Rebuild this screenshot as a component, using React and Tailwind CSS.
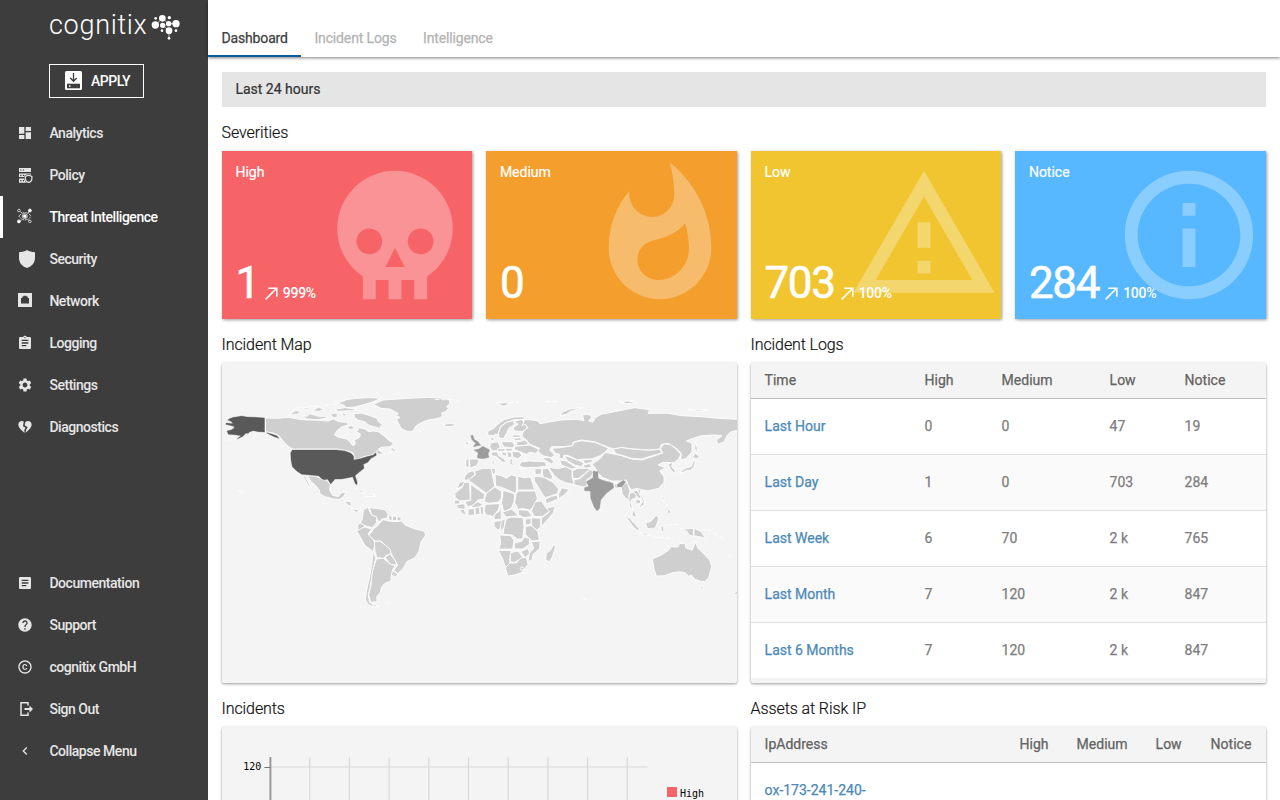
import React from "react";
import {
  MdDashboard, MdAssignment, MdSettings, MdArticle, MdHelp,
  MdCopyright, MdChevronLeft, MdWhatshot, MdInfoOutline,
} from "react-icons/md";

const PolicyIcon = () => (
  <svg className="size-4" viewBox="0 0 16 16" fill="currentColor">
    <path fillRule="evenodd" d="M2 1h12v4H2zM3.3 2.4v1.2h1.2V2.4zM5.8 2.4v1.2H7V2.4zM2 6.5h12v1.2l-2.6-.7-4 1.6V10H2zM3.3 7.7v1.2h1.2V7.7zM5.8 7.7v1.2H7V7.7zM2 11.6h5.2c.2 1.600 1 3 2.200 4.200H2zM3.300 13v1.200h1.200V13zM5.800 13v1.200H7V13z" />
    <path d="M11.600 8.200l3.300 1.200v2.300c0 1.900-1.300 3.100-3.300 3.900-2-.8-3.300-2-3.300-3.900V9.400z" fill="#3d3d3d" stroke="currentColor" strokeWidth="1.200" />
  </svg>
);
const ThreatIcon = () => (
  <svg className="size-4 -translate-y-px" viewBox="0 0 16 16" fill="none" stroke="currentColor" strokeWidth="0.7">
    <path d="M2 8.300C3.800 5.600 5.700 4.600 8 4.600s4.200 1 6 3.700c-1.800 2.500-3.700 3.600-6 3.600s-4.200-1.100-6-3.600z" strokeDasharray="3 .8" />
    <circle cx="7.800" cy="8.200" r="2.500" />
    <circle cx="7.800" cy="8.200" r="1.400" fill="currentColor" />
    <path d="M3.400 3.600l1.600 1.600M12.500 3.400l-1.600 1.800M3.400 13l1.600-1.600M12.500 13l-1.600-1.600" />
    <circle cx="1.900" cy="2.500" r="1.300" />
    <circle cx="12.900" cy="2.500" r="1.500" fill="currentColor" />
    <circle cx="1.900" cy="13.400" r="1.500" fill="currentColor" />
    <circle cx="12.900" cy="13.400" r="1.300" />
  </svg>
);
const ShieldIcon = () => (
  <svg className="ml-0.5 h-[18px] w-4" viewBox="0 0 16 18" fill="currentColor">
    <path d="M8 0c2.200 1.400 4.800 2 8 2.200v5.600c0 5-3 8.600-8 10.200-5-1.600-8-5.200-8-10.200V2.200C3.200 2 5.800 1.400 8 0z" />
  </svg>
);
const NetworkIcon = () => (
  <svg className="size-4 -translate-y-px" viewBox="0 0 16 16" fill="currentColor">
    <path fillRule="evenodd" d="M1 1h14v14H1zM4 6v5.500h8V6h-1.300V4.500H9.500V3.700h-3v.8H5.300V6z" />
  </svg>
);
const BrokenHeartIcon = () => (
  <svg className="size-4" viewBox="0 0 24 24" fill="currentColor">
    <path d="M10.200 3.900C9.300 3.300 8.400 3 7.300 3 4.300 3 2 5.400 2 8.400c0 4.500 4.200 8 9.300 12.600l-.3-4.700 2-3-4-2.500z" />
    <path d="M12.300 4.900C13.500 3.700 15 3 16.600 3 19.700 3 22 5.400 22 8.400c0 4.400-3.600 7.700-9 12.300l.3-3.900 2.700-4.500-4.500-3z" />
  </svg>
);
const SignOutIcon = () => (
  <svg className="size-4" viewBox="0 0 16 16" fill="currentColor">
    <path d="M11 4.500V1.700H4v12.600h7v-2.800" fill="none" stroke="currentColor" strokeWidth="1.500" />
    <path d="M7.500 7h5V4.500L16 8l-3.500 3.500V9h-5z" />
  </svg>
);
const ApplyIcon = () => (
  <svg className="h-[19px] w-[17px] -translate-y-px" viewBox="0 0 17 19">
    <rect width="17" height="19" rx="1.500" fill="#fff" />
    <path d="M8.500 2v8M5.300 7l3.200 3.300L11.700 7" stroke="#3d3d3d" strokeWidth="1.300" fill="none" />
    <rect x="2" y="12.700" width="13" height="4.600" fill="#3d3d3d" />
    <rect x="4" y="14.300" width="1.500" height="1.500" fill="#fff" />
  </svg>
);
const TrendIcon = ({ className }) => (
  <svg className={className} viewBox="0 0 19 19" fill="none" stroke="currentColor" strokeWidth="1.500">
    <path d="M3.600 15.400L14.700 4.300M6.300 4.200h8.500v8.500" />
  </svg>
);

const mainNav = [
  ["Analytics", MdDashboard], ["Policy", PolicyIcon], ["Threat Intelligence", ThreatIcon, true],
  ["Security", ShieldIcon], ["Network", NetworkIcon], ["Logging", MdAssignment],
  ["Settings", MdSettings], ["Diagnostics", BrokenHeartIcon],
];
const footNav = [
  ["Documentation", MdArticle], ["Support", MdHelp], ["cognitix GmbH", MdCopyright],
  ["Sign Out", SignOutIcon], ["Collapse Menu", MdChevronLeft],
];

function NavItem({ label, Icon, active }) {
  return (
    <li className={"flex h-[42px] items-center border-l-[3px] pl-[14px] text-sm font-medium " +
      (active ? "border-white text-white" : "border-transparent text-[#e6e6e6]")}>
      <span className="flex w-8 items-center"><Icon className="size-4" /></span>
      <span className="pl-[0.4px] tracking-[-0.46px] whitespace-nowrap">{label}</span>
    </li>
  );
}

function Sidebar() {
  return (
    <aside className="flex w-[208px] shrink-0 flex-col bg-[#3d3d3d]">
      <div className="flex h-[49px] items-start pt-[5px] pl-[49px]">
        <span className="w-[102px] text-[27px] leading-[40px] font-light tracking-[0.7px] whitespace-nowrap text-white">cognitix</span>
        <svg className="mt-[8px] h-[28px] w-[30px]" viewBox="0 0 90 84" fill="#fff">
          <circle cx="13" cy="36" r="11" /><circle cx="34" cy="16" r="10" /><circle cx="35" cy="37" r="8" />
          <circle cx="53" cy="32" r="8" /><circle cx="75" cy="32" r="11" /><circle cx="54" cy="53" r="10" />
          <circle cx="14" cy="16" r="4" /><circle cx="55" cy="14" r="5" /><circle cx="33" cy="53" r="4" />
          <circle cx="75" cy="53" r="4" /><circle cx="54" cy="76" r="4" />
          <path d="M13 36L34 16L53 32L75 32M35 37L54 53V76" stroke="#fff" strokeWidth="2" fill="none" />
        </svg>
      </div>
      <button className="mt-[15px] ml-[49px] flex h-[34px] w-[95px] items-center border border-white pl-[15px] text-sm font-medium text-white">
        <ApplyIcon />
        <span className="ml-[9px] tracking-[-0.5px]">APPLY</span>
      </button>
      <ul className="mt-[14px]">{mainNav.map(([l, I, a]) => <NavItem key={l} label={l} Icon={I} active={a} />)}</ul>
      <ul className="mt-auto mb-[28px]">{footNav.map(([l, I]) => <NavItem key={l} label={l} Icon={I} />)}</ul>
    </aside>
  );
}

const SkullIcon = ({ className }) => (
  <svg className={className} viewBox="0 0 24 24" fill="currentColor">
    <path d="M12,2A9,9 0 0,0 3,11C3,14.03 4.53,16.82 7,18.47V22H9V19H11V22H13V19H15V22H17V18.46C19.47,16.81 21,14 21,11A9,9 0 0,0 12,2M8,11A2,2 0 0,1 10,13A2,2 0 0,1 8,15A2,2 0 0,1 6,13A2,2 0 0,1 8,11M16,11A2,2 0 0,1 18,13A2,2 0 0,1 16,15A2,2 0 0,1 14,13A2,2 0 0,1 16,11M12,14L13.5,17H10.5L12,14Z" />
  </svg>
);
const WarnIcon = ({ className }) => (
  <svg className={className} viewBox="0 0 24 24" fill="currentColor">
    <path d="M12 5.99L19.53 19H4.47L12 5.99M12 2L1 21h22L12 2zm1 14h-2v2h2v-2zm0-6h-2v4h2v-4z" />
  </svg>
);

const severities = [
  { label: "High", value: "1", pct: "999%", bg: "bg-[#f76468]", Icon: SkullIcon },
  { label: "Medium", value: "0", bg: "bg-[#f49e2d]", Icon: MdWhatshot },
  { label: "Low", value: "703", pct: "100%", bg: "bg-[#f0c52f]", Icon: WarnIcon },
  { label: "Notice", value: "284", pct: "100%", bg: "bg-[#57b8ff]", Icon: MdInfoOutline },
];

function SeverityCard({ label, value, pct, bg, Icon }) {
  return (
    <div className={"relative flex h-[168px] flex-col justify-between overflow-hidden pt-[11px] pl-[13.8px] text-white shadow-[1px_1px_3px_rgba(0,0,0,0.4)] " + bg}>
      <Icon className="absolute top-[7px] right-0 size-[154px] opacity-30" />
      <div className="relative text-sm leading-5 [-webkit-text-stroke:0.2px]">{label}</div>
      <div className="relative flex h-[68px] items-start">
        <span className="text-[44px] leading-[64px] tracking-[-1.3px] [-webkit-text-stroke:0.6px]">{value}</span>
        {pct && <TrendIcon className="mt-[33px] ml-[3px] size-[19px]" />}
        {pct && <span className="mt-[32px] ml-[2px] text-sm leading-5 font-medium tracking-[-0.3px]">{pct}</span>}
      </div>
    </div>
  );
}

// Western hemisphere outlines, three units to a pixel.
const usa = [
  "18,105 24,101 35,97 44,96 60,93 75,96 100,97 129,99 129,141 110,140 95,137 84,140 80,145 72,145 64,154 46,162 58,152 40,149 20,148 16,138 28,135 38,129 36,124 12,118 14,114 34,116 28,109",
  "135,143 150,147 165,152 172,160 158,155 145,149",
  "207,203 212,195 345,195 370,198 388,205 396,214 396,225 415,221 440,214 455,210 462,203 464,211 448,220 438,232 425,238 427,250 412,262 400,272 406,290 406,299 401,296 393,275 380,278 360,282 340,282 327,297 318,283 306,284 300,281 290,272 265,270 240,268 225,258 212,245 208,225",
];
const west = [
  "131,99 165,100 200,97 240,104 290,106 320,108 335,102 352,110 375,112 380,120 360,126 345,138 338,150 352,157 375,162 385,172 393,182 401,178 398,165 412,158 417,148 405,140 412,128 430,132 440,140 455,138 470,140 490,155 500,165 516,175 505,185 480,187 470,192 475,196 465,200 450,210 430,214 400,225 397,212 392,202 370,196 345,192 215,192 205,188 190,175 178,160 172,152 155,144 131,140",
  "395,87 420,84 445,92 465,100 470,110 485,120 475,124 478,131 455,125 440,120 430,110 410,106 400,98",
  "240,92 255,94 265,86 290,94 312,94 315,100 285,104 255,102", "203,88 222,77 240,80 225,88",
  "360,50 375,44 400,40 445,38 478,40 455,50 430,58 400,66 375,68 365,60 350,56", "336,74 370,68 405,72 390,77 350,79",
  "245,70 260,67 265,71 250,73", "272,76 290,67 308,72 290,80", "325,86 345,84 348,96 335,98", "356,84 375,86 368,94",
  "375,124 390,122 400,130 385,134", "504,191 512,189 528,199 515,199",
  "463,203 470,194 478,200 486,206 474,209",
  "455,58 485,45 560,40 620,37 665,40 684,44 684,58 675,64 680,70 672,80 660,84 662,92 655,98 640,102 620,105 605,110 590,118 580,126 575,138 560,140 540,132 530,115 525,103 535,97 522,92 530,86 520,80 505,72 478,70",
  "258,272 285,274 300,283 315,286 326,299 324,315 333,331 350,335 358,323 373,321 366,334 354,343 335,342 310,335 295,327 293,315 278,298 268,290",
  "243,269 250,272 258,288 270,311 260,302 252,288", "352,343 365,344 360,350", "368,348 388,350 388,364 378,360", "388,366 398,372 418,378 402,382",
  "400,310 420,318 430,325 415,321", "444,327 458,330 447,334", "50,316 62,323 64,328",
  "425,374 440,366 443,378 450,390 465,395 465,412 452,428 430,422 416,415 422,402",
  "443,368 460,370 490,374 500,388 495,400 480,402 476,410 468,408 464,395 450,390", "500,388 512,396 510,408 502,406",
  "512,394 525,393 525,406 513,408", "527,393 540,400 534,408 526,406", "408,420 416,414 430,422 420,432 408,438",
  "405,438 428,426 450,432 439,447 455,464 460,472 455,500 430,482 415,455",
  "455,432 470,420 476,412 485,404 500,408 520,410 540,408 550,420 580,432 606,438 612,450 598,470 592,498 580,518 555,530 545,550 528,566 516,556 528,540 518,523 508,505 490,480 478,468 460,468 441,450 450,442",
  "458,470 475,468 490,480 505,492 508,506 492,512 488,520 466,518 460,500", "490,516 505,507 520,525 525,540 505,538", "511,556 529,568 522,575 509,571",
  "455,498 462,520 455,550 450,580 445,610 440,630 443,650 460,667 442,660 431,645 435,615 443,580 450,540",
  "464,522 485,520 505,537 520,542 512,556 508,575 508,588 490,595 480,605 476,622 465,635 466,650 447,652 441,630 448,600 452,560",
  "455,656 472,666 456,664", "494,655 508,652 500,657",
];
// Eastern hemisphere outlines, same scale, offset by 213 pixels.
const mid = [
  "108,152 115,151 118,163 130,170 138,181 116,185 123,175 112,165",
  "118,195 132,192 145,184 165,195 160,206 163,217 145,221 128,219 130,203",
  "475,258 490,260 490,280 510,288 535,295 537,308 515,325 498,345 495,370 487,378 478,365 468,340 467,318 450,317 449,308 462,304 455,290 475,278",
  "547,299 565,286 573,290 562,305 548,306",
];
const east = [
  "25,119 45,115 65,118 55,124 35,125", "92,172 102,170 100,179 92,180", "104,222 128,222 133,228 125,243 106,249", "94,222 103,222 103,248 93,245",
  "158,150 160,138 178,130 190,117 208,104 240,96 265,95 272,101 255,104 240,104 215,112 197,125 190,147 172,152",
  "190,147 198,125 215,112 235,107 240,118 222,130 217,142 207,160 195,160", "238,108 258,104 270,110 278,130 262,140 240,138 235,128 250,118",
  "168,160 178,156 178,165 170,168", "168,174 190,170 196,185 188,197 172,197 165,185", "199,170 232,170 240,180 235,189 208,186", "232,150 256,150 258,156 234,158", "236,160 258,158 260,166 240,167",
  "245,172 270,165 282,175 270,182 245,182", "240,184 285,180 315,194 302,205 285,202 275,208 250,198 238,192", "168,202 188,200 192,212 208,222 215,232 204,232 185,215 172,212",
  "188,192 212,190 210,198 190,200", "212,190 234,190 232,198 214,199", "199,202 215,202 215,214 203,210", "216,200 230,202 232,216 220,218", "226,222 236,222 232,230 238,244 226,236", "232,200 252,200 262,210 250,222 234,216",
  "202,234 212,234 208,240", "172,226 178,226 177,240 172,238", "255,238 262,230 285,228 330,230 337,243 310,247 270,248 256,244",
  "185,55 215,53 222,57 208,64", "250,51 225,54 240,57", "375,92 385,80 410,71 445,68 410,78 395,88", "558,49 580,48 605,54 575,56", "760,73 820,76 790,79",
  "262,122 270,104 284,104 310,108 315,116 340,112 380,105 430,103 448,108 443,90 460,88 472,95 462,108 474,112 482,98 500,88 550,78 600,68 645,74 640,85 700,85 740,92 800,95 850,100 910,103 910,135 890,140 878,150 868,170 850,178 845,165 862,152 840,150 800,152 775,160 755,168 772,175 772,200 755,220 738,225 740,205 725,190 700,175 680,178 675,192 645,195 600,192 560,188 535,192 525,188 500,178 480,170 440,165 415,172 415,182 385,185 350,185 345,195 360,210 350,218 325,212 310,200 315,190 285,178 275,165 262,155 265,140 280,128 272,118",
  "320,218 345,218 360,232 350,236 335,228", "352,190 385,187 415,182 415,173 440,167 480,172 500,180 522,190 512,200 497,212 470,222 445,222 428,225 405,213 388,210 385,222 372,218 375,208 362,205",
  "388,212 405,216 430,226 448,234 440,245 420,240 400,228", "375,225 395,228 412,240 428,250 410,252 380,240", "445,225 472,223 475,230 450,237", "445,240 465,236 472,247 450,250",
  "535,192 560,188 600,193 645,196 675,193 682,204 650,213 620,222 590,220 560,210 545,207",
  "472,238 495,222 512,202 540,208 560,212 590,222 620,225 650,216 684,204 677,190 690,176 708,180 722,190 738,208 732,222 715,235 700,232 685,232 670,240 692,248 675,258 688,275 688,292 672,310 640,318 625,315 605,310 590,315 580,300 575,285 555,288 530,288 505,278 492,266 484,252",
  "700,238 714,232 711,245 722,257 717,264 707,252", "783,226 778,245 768,256 756,256 746,262 735,262 752,250 770,244 776,228", "773,216 782,205 796,216 784,222", "782,172 788,190 785,205 780,190", "738,264 745,264 740,272",
  "340,246 358,250 375,250 392,245 412,255 412,275 418,298 395,294 375,285 358,270", "412,258 430,250 455,250 468,250 448,268 430,281 415,280", "418,299 418,284 435,281 450,268 468,252 475,262 470,276 455,285 458,302 445,306",
  "322,252 340,250 354,275 350,284 325,276", "300,252 320,250 320,266 302,270", "298,275 310,274 330,278 355,292 372,312 368,326 350,332 333,338 325,330 312,308 300,290", "332,342 350,334 368,330 370,342 335,357", "372,325 382,308 403,313 390,330 372,340",
  "495,280 515,286 532,289 530,294 508,288", "538,296 545,298 550,312 540,308", "560,307 575,290 582,305 586,320 582,332 586,350 578,342 572,340 562,325",
  "585,325 596,322 606,332 600,342 592,342 588,350 594,372 586,366 582,345", "594,318 606,316 618,330 622,340 612,340 604,330", "608,312 620,316 616,326 628,345 628,360 614,368 616,360 624,350", "602,346 616,343 618,354 606,358", "499,374 506,385 500,388",
  "90,275 100,262 115,257 121,268 103,284 88,286", "65,312 75,292 92,288 84,303", "60,325 84,306 88,292 104,292 107,345 75,348 62,338", "100,285 122,270 120,258 145,250 172,250 172,265 180,304 155,325 105,288",
  "168,250 182,250 182,265 176,268", "108,298 150,328 148,342 130,345 115,362 100,365 90,350 108,346", "155,325 180,306 200,318 200,340 190,352 160,355 148,348", "182,268 200,272 215,280 230,270 246,274 246,314 242,325 204,308 182,302",
  "249,274 270,278 288,276 292,290 300,315 249,315", "204,316 240,326 238,350 230,370 207,380 200,352 204,335", "249,318 302,318 308,340 300,362 285,375 262,370 250,374 240,352 244,328", "302,350 320,348 335,370 348,376 325,394 300,395 290,378",
  "335,368 362,364 355,385 335,408 320,425 320,400 345,380", "152,358 195,356 192,373 175,394 155,390 148,378", "58,346 72,345 78,356 60,358", "64,360 85,356 92,362 90,374 70,370", "74,372 88,374 96,392 82,386", "100,372 118,370 120,390 100,392", "121,368 134,366 136,388 122,390", "136,366 146,364 146,388 138,388", "110,364 128,350 145,358 136,365 115,368",
  "178,400 178,390 192,380 198,362 200,402 182,404", "203,382 230,372 252,392 215,396", "250,374 280,376 292,394 268,398 252,390", "178,410 200,406 202,424 190,436 178,424", "200,406 212,402 208,428 196,438", "214,402 230,396 265,398 268,425 264,462 248,462 232,450 205,448 208,430",
  "272,402 290,400 288,418 272,420", "290,398 318,400 318,425 306,436 290,420", "272,424 290,422 310,440 314,466 292,468 272,448", "195,450 228,452 238,466 234,492 192,492 198,475", "238,475 262,468 268,456 284,460 284,478 265,492 240,492", "290,470 316,468 315,490 295,508 292,525 280,530 284,505 297,490",
  "258,500 280,490 285,505 272,518", "228,503 250,498 265,518 240,532 226,530", "190,496 230,497 226,512 224,546 212,546 203,520", "212,548 226,534 245,534 258,520 275,516 280,538 262,562 240,570 220,573",
  "359,476 362,488 352,518 344,530 333,526 335,505 347,496",
  "653,522 680,510 700,497 710,485 728,487 735,476 752,475 752,488 772,496 782,471 790,490 805,505 825,525 831,545 822,578 810,590 795,588 780,582 770,570 762,574 752,564 735,560 710,564 690,572 665,573 658,552",
  "797,604 807,605 801,614", "895,626 910,618 910,630", "735,430 752,432 776,430 776,454 762,450 758,440", "778,430 800,440 812,460 795,455 778,453",
  "632,415 650,408 665,390 672,400 664,425 655,432 638,430", "570,391 585,400 612,430 613,441 595,425", "613,444 630,445 648,452 630,450", "678,425 692,420 686,426 688,440 680,438", "594,374 602,384 606,398 592,392",
  "684,336 690,334 688,350", "700,372 708,378 706,388 698,382", "684,308 690,302 688,312", "252,250 272,251 262,253",
];
const faint = "M20,166L46,161M195,97L220,70L300,62M310,60L350,56M340,50L410,38M430,335L474,333M480,208L528,200";
const faintEast = "M0,43L75,46M185,52L255,52M335,50L370,49M560,54L605,54M700,420L730,418M655,456L715,460M800,432L830,438M835,444L872,465M878,508L895,520M443,641L455,643M690,355L705,365M548,50L600,46M735,268L750,262";

const Land = ({ items, fill, stroke = "#fff" }) => items.map((p, i) => <polygon key={i} points={p} fill={fill} stroke={stroke} />);

function WorldMap() {
  return (
    <svg className="h-[320px] w-full rounded-[2px]" viewBox="0 0 516 320" preserveAspectRatio="xMinYMin slice">
      <g transform="translate(-0.300 22) scale(.33333)" stroke="#fff" strokeWidth="2.600" strokeLinejoin="round">
        <path d={faint} fill="none" strokeDasharray="14 5" />
        <Land items={west} fill="#cfcfcf" />
        <g strokeWidth="1"><Land items={usa} fill="#595959" stroke="#595959" /></g>
        <path d="M131 98V142" fill="none" />
      </g>
      <g transform="translate(212.700 22) scale(.33333)" stroke="#fff" strokeWidth="2.600" strokeLinejoin="round">
        <path d={faintEast} fill="none" strokeDasharray="14 5" />
        <Land items={east} fill="#cfcfcf" />
        <g strokeWidth="1"><Land items={mid} fill="#9c9c9c" stroke="#9c9c9c" /></g>
        <circle cx="262" cy="551" r="5" fill="#cfcfcf" />
      </g>
    </svg>
  );
}

function IncidentChart() {
  const lines = [1, 2, 3, 4, 5, 6, 7, 8, 9];
  return (
    <svg className="h-[320px] w-full" viewBox="0 0 516 320" preserveAspectRatio="xMinYMin slice">
      {lines.map((i) => <path key={i} d={`M${48 + i * 39.7} 30.500V320`} stroke="#d8d8d8" strokeWidth="1.200" />)}
      <path d="M48 40H425.500" stroke="#d8d8d8" strokeWidth="1.200" />
      <path d="M48.400 30V320" stroke="#999" strokeWidth="2" />
      <path d="M42.400 40.500H48" stroke="#777" strokeWidth="1" />
      <text x="39.400" y="43" textAnchor="end" fontSize="10" fontFamily="'DejaVu Sans Mono', monospace">120</text>
      <rect x="445" y="60" width="10" height="10" fill="#f76468" />
      <text x="457.900" y="70" fontSize="10" fontFamily="'DejaVu Sans Mono', monospace">High</text>
    </svg>
  );
}

const logs = [
  ["Last Hour", "0", "0", "47", "19"], ["Last Day", "1", "0", "703", "284"], ["Last Week", "6", "70", "2 k", "765"],
  ["Last Month", "7", "120", "2 k", "847"], ["Last 6 Months", "7", "120", "2 k", "847"],
];
const panel = "h-[320px] overflow-hidden rounded-[2px] bg-[#f4f4f4] shadow-[0_1px_3px_rgba(0,0,0,0.4)]";
const logCols = "grid grid-cols-[160px_77px_108px_75px_1fr] items-center pb-[2px] pl-[14px]";
const riskCols = "grid grid-cols-[255px_57px_79px_55px_1fr] items-center pb-[2px] pl-[14px]";

function Section({ title, children }) {
  return (
    <section>
      <h2 className="flex h-[44px] items-center text-base font-light tracking-[-0.1px] text-[#111] [-webkit-text-stroke:0.2px]"><span className="mt-[8px]">{title}</span></h2>
      {children}
    </section>
  );
}

export default function App() {
  return (
    <div className="flex h-[800px] w-[1280px] overflow-hidden bg-white font-['Roboto',sans-serif]">
      <Sidebar />
      <main className="flex min-w-0 flex-1 flex-col">
        <header className="flex h-[57px] shrink-0 items-end bg-white text-sm tracking-[-0.14px] text-[#b3b3b3] shadow-[0_1px_3px_rgba(0,0,0,0.5)] [-webkit-text-stroke:0.25px]">
          <div className="h-[29px] w-[93px] border-b-2 border-[#0a5c9c] pl-[13.4px] whitespace-nowrap text-[#404040]">Dashboard</div>
          <div className="h-[29px] w-[109px] pl-[13.4px] whitespace-nowrap">Incident Logs</div>
          <div className="h-[29px] pl-[13px]">Intelligence</div>
        </header>
        <div className="flex-1 overflow-hidden pt-[15px] pr-[14.4px] pl-[13.6px]">
          <div className="flex h-[35px] items-center bg-[#e5e5e5] pb-[2px] pl-[13.8px] text-sm text-[#333] [-webkit-text-stroke:0.2px]">Last 24 hours</div>
          <Section title="Severities">
            <div className="grid grid-cols-4 gap-[14px]">{severities.map((s) => <SeverityCard key={s.label} {...s} />)}</div>
          </Section>
          <div className="grid grid-cols-2 gap-x-[14px]">
            <Section title="Incident Map"><div className={panel}><WorldMap /></div></Section>
            <Section title="Incident Logs">
              <div className={panel + " text-sm text-[#7d7d7d] [-webkit-text-stroke:0.25px]"}>
                <div className={logCols + " h-[36px] border-b border-[#bdbdbd] text-[#636363]"}>
                  <span>Time</span><span>High</span><span>Medium</span><span>Low</span><span>Notice</span>
                </div>
                {logs.map((r, i) => (
                  <div key={r[0]} className={logCols + (i < 4 ? " h-[56px] border-b border-[#e0e0e0]" : " h-[55px]") + (i % 2 ? " bg-[#fafafa]" : " bg-white")}>
                    <span className="text-[#4a89b8]">{r[0]}</span>
                    {r.slice(1).map((c, j) => <span key={j}>{c}</span>)}
                  </div>
                ))}
              </div>
            </Section>
            <Section title="Incidents"><div className={panel}><IncidentChart /></div></Section>
            <Section title="Assets at Risk IP">
              <div className={panel + " text-sm [-webkit-text-stroke:0.25px]"}>
                <div className={riskCols + " h-[36px] border-b border-[#bdbdbd] text-[#636363]"}>
                  <span>IpAddress</span><span>High</span><span>Medium</span><span>Low</span><span>Notice</span>
                </div>
                <div className="h-[284px] bg-white pt-[17px] pl-[14px] text-[#4a89b8]">ox-173-241-240-</div>
              </div>
            </Section>
          </div>
        </div>
      </main>
    </div>
  );
}
